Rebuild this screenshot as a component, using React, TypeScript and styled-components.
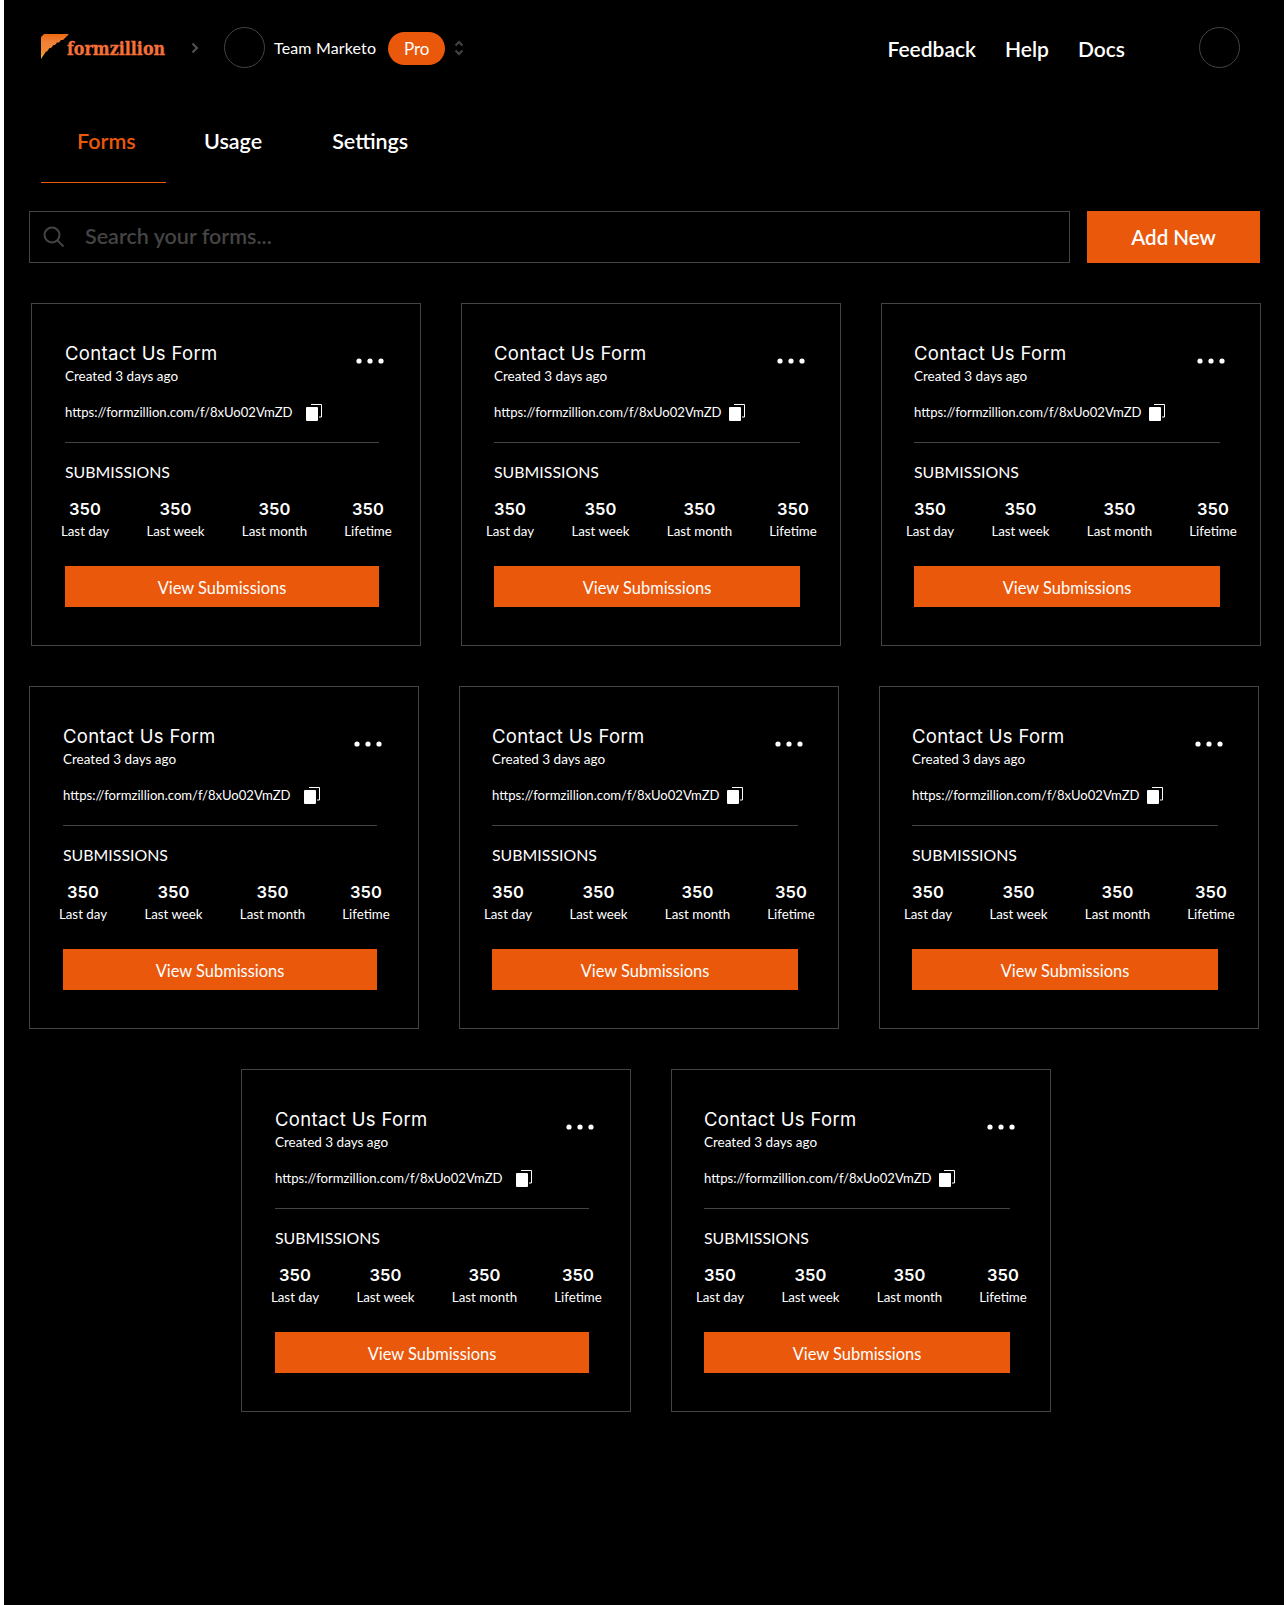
import * as React from 'react';
import styled, { createGlobalStyle } from 'styled-components';

const ORANGE = '#ea580c';
const LINE = '#444444';

const GlobalStyle = createGlobalStyle`
  * {
    box-sizing: border-box;
  }
  body {
    margin: 0;
    background: #ffffff;
    font-family: Lato, "Liberation Sans", sans-serif;
    color: #ffffff;
  }
`;

const Page = styled.main`
  width: 1280px;
  min-height: 1605px;
  margin: 0 4px;
  background: #000000;
  padding-top: 27px;
`;

const TopBar = styled.header`
  display: flex;
  align-items: center;
  height: 41px;
  padding: 0 44px 0 37px;
`;

const Logo = styled.div`
  display: flex;
  align-items: flex-start;
  width: 125px;
  white-space: nowrap;
`;

const LogoText = styled.span`
  font-family: "DejaVu Serif", serif;
  font-stretch: condensed;
  font-weight: 700;
  font-size: 17.7px;
  line-height: 24px;
  color: #f4703a;
  -webkit-text-stroke: 0.3px #f4703a;
  margin-left: -3px;
  margin-top: 3px;
`;

const Crumb = styled.svg`
  margin-left: 25px;
`;

const Avatar = styled.div<{ $ml: number }>`
  width: 41px;
  height: 41px;
  border: 1px solid ${LINE};
  border-radius: 50%;
  margin-left: ${({ $ml }) => $ml}px;
  flex: none;
`;

const TeamName = styled.span`
  margin-left: 9px;
  font-size: 16px;
  letter-spacing: 0.15px;
`;

const ProPill = styled.span`
  display: flex;
  align-items: center;
  justify-content: center;
  width: 57px;
  height: 33px;
  margin: 1px 0 0 12px;
  border-radius: 17px;
  background: ${ORANGE};
  font-size: 17px;
`;

const UpDown = styled.svg`
  margin-left: 9px;
`;

const RightNav = styled.nav`
  display: flex;
  gap: 29px;
  margin-left: auto;
`;

const NavLink = styled.a`
  font-size: 21px;
  font-weight: 600;
  line-height: 28px;
  margin-top: 2px;
`;

const Tabs = styled.div`
  display: flex;
  margin-top: 59px;
  padding-left: 37px;
`;

const Tab = styled.a<{ $active?: boolean; $ml?: number }>`
  font-size: 21.5px;
  font-weight: 600;
  line-height: 28px;
  padding-bottom: 27px;
  margin-left: ${({ $ml }) => $ml || 0}px;
  ${({ $active }) =>
    $active &&
    `
    width: 125px;
    padding-left: 36px;
    color: ${ORANGE};
    border-bottom: 1px solid ${ORANGE};
  `}
`;

const SearchRow = styled.div`
  display: flex;
  gap: 17px;
  margin-top: 28px;
  padding-left: 25px;
`;

const SearchBox = styled.div`
  display: flex;
  align-items: center;
  width: 1041px;
  height: 52px;
  padding-left: 13px;
  border: 1px solid ${LINE};
`;

const SearchText = styled.span`
  margin: 0 0 2px 20px;
  font-size: 21.5px;
  font-weight: 600;
  color: ${LINE};
`;

const AddButton = styled.button`
  width: 173px;
  height: 52px;
  border: 0;
  background: ${ORANGE};
  color: #ffffff;
  font-family: inherit;
  font-size: 20.5px;
  font-weight: 600;
`;

const Rows = styled.div`
  display: flex;
  flex-direction: column;
  gap: 40px;
  margin-top: 40px;
`;

const Row = styled.div<{ $shifted?: boolean }>`
  display: flex;
  justify-content: center;
  gap: 40px;
  padding-left: ${({ $shifted }) => ($shifted ? 4 : 0)}px;
`;

const Card = styled.article<{ $wide?: boolean }>`
  width: ${({ $wide }) => ($wide ? 390 : 380)}px;
  height: 343px;
  padding: 37px ${({ $wide }) => ($wide ? 41 : 40)}px 38px ${({ $wide }) => ($wide ? 33 : 32)}px;
  border: 1px solid ${LINE};
`;

const CardHead = styled.div`
  display: flex;
  justify-content: space-between;
  align-items: center;
  margin-right: -5px;
`;

const CardTitle = styled.h3`
  margin: 0;
  font-family: Inter, sans-serif;
  font-size: 18.5px;
  font-weight: 400;
  line-height: 24px;
  letter-spacing: 0.35px;
`;

const Created = styled.p`
  margin: 2px 0 0;
  font-size: 13.5px;
  line-height: 18px;
`;

const Dots = styled.svg`
  margin-bottom: 4px;
`;

const UrlRow = styled.div<{ $wide?: boolean }>`
  display: flex;
  align-items: center;
  gap: ${({ $wide }) => ($wide ? 13 : 7)}px;
  margin-top: 17px;
  font-size: 13.1px;
  line-height: 20px;
`;

const Divider = styled.hr`
  height: 1px;
  margin: 20px 0 0;
  border: 0;
  background: ${LINE};
`;

const SectionLabel = styled.div`
  margin-top: 19px;
  font-size: 15.9px;
  line-height: 20px;
`;

const Stats = styled.div<{ $wide?: boolean }>`
  display: grid;
  grid-template-columns: 48px 57px 65px 46px;
  gap: 38px;
  margin: 16px 0 0 ${({ $wide }) => ($wide ? -4 : -8)}px;
`;

const Stat = styled.div`
  display: flex;
  flex-direction: column;
  align-items: center;
  white-space: nowrap;
`;

const StatValue = styled.strong`
  font-family: Inter, sans-serif;
  font-size: 16.5px;
  font-weight: 600;
  line-height: 22px;
`;

const StatLabel = styled.span`
  margin-top: 2px;
  font-size: 13.3px;
  line-height: 18px;
`;

const ViewButton = styled.button`
  display: block;
  width: 100%;
  height: 41px;
  margin-top: 26px;
  padding: 2px 0 0;
  border: 0;
  background: ${ORANGE};
  color: #ffffff;
  font-family: inherit;
  font-size: 16.4px;
`;

const LogoMark = () => (
  <svg width="29" height="26" viewBox="0 0 29 26">
    <defs>
      <linearGradient id="mark" x1="0" y1="0" x2="0" y2="1">
        <stop offset="0" stopColor="#ee6a10" />
        <stop offset="0.35" stopColor="#f0813c" />
        <stop offset="0.7" stopColor="#f08a2c" />
        <stop offset="1" stopColor="#f2b040" />
      </linearGradient>
    </defs>
    <path
      d="M3 0H28L22 6H20L18 8.5H16L14 11H12.5L10 14H8.5L6 17.5H5L0 25V3Z"
      fill="url(#mark)"
    />
  </svg>
);

const CopyIcon = () => (
  <svg width="16" height="17" viewBox="0 0 16 17">
    <path d="M5 .5H15.5V13H13" fill="none" stroke="#fff" />
    <rect x="0" y="3" width="12" height="14" rx="1" fill="#fff" />
  </svg>
);

const statLabels = ['Last day', 'Last week', 'Last month', 'Lifetime'];

const FormCard = ({ wide }: { wide?: boolean }) => (
  <Card $wide={wide}>
    <CardHead>
      <div>
        <CardTitle>Contact Us Form</CardTitle>
        <Created>Created 3 days ago</Created>
      </div>
      <Dots width="28" height="6" viewBox="0 0 28 6" fill="#fff">
        <circle cx="3" cy="3" r="2.6" />
        <circle cx="14" cy="3" r="2.6" />
        <circle cx="25" cy="3" r="2.6" />
      </Dots>
    </CardHead>
    <UrlRow $wide={wide}>
      <span>https://formzillion.com/f/8xUo02VmZD</span>
      <CopyIcon />
    </UrlRow>
    <Divider />
    <SectionLabel>SUBMISSIONS</SectionLabel>
    <Stats $wide={wide}>
      {statLabels.map((label) => (
        <Stat key={label}>
          <StatValue>350</StatValue>
          <StatLabel>{label}</StatLabel>
        </Stat>
      ))}
    </Stats>
    <ViewButton>View Submissions</ViewButton>
  </Card>
);

const App = () => (
  <Page>
    <GlobalStyle />
    <TopBar>
      <Logo>
        <LogoMark />
        <LogoText>formzillion</LogoText>
      </Logo>
      <Crumb width="8" height="12" viewBox="0 0 8 12" fill="none" stroke="#555" strokeWidth="2">
        <path d="M1.5 1.5 6 6 1.5 10.5" />
      </Crumb>
      <Avatar $ml={25} />
      <TeamName>Team Marketo</TeamName>
      <ProPill>Pro</ProPill>
      <UpDown width="10" height="16" viewBox="0 0 10 16" fill="none" stroke="#444" strokeWidth="2">
        <path d="M1.5 5.5 5 2l3.5 3.5M1.5 10.5 5 14l3.5-3.5" />
      </UpDown>
      <RightNav>
        <NavLink>Feedback</NavLink>
        <NavLink>Help</NavLink>
        <NavLink>Docs</NavLink>
      </RightNav>
      <Avatar $ml={74} />
    </TopBar>
    <Tabs>
      <Tab $active>Forms</Tab>
      <Tab $ml={38}>Usage</Tab>
      <Tab $ml={70}>Settings</Tab>
    </Tabs>
    <SearchRow>
      <SearchBox>
        <svg width="22" height="22" viewBox="0 0 22 22" fill="none" stroke="#444" strokeWidth="2">
          <circle cx="9" cy="9" r="7.5" />
          <path d="m14.5 14.5 6 6" />
        </svg>
        <SearchText>Search your forms...</SearchText>
      </SearchBox>
      <AddButton>Add New</AddButton>
    </SearchRow>
    <Rows>
      <Row $shifted>
        <FormCard wide />
        <FormCard />
        <FormCard />
      </Row>
      <Row>
        <FormCard wide />
        <FormCard />
        <FormCard />
      </Row>
      <Row $shifted>
        <FormCard wide />
        <FormCard />
      </Row>
    </Rows>
  </Page>
);

export default App;
